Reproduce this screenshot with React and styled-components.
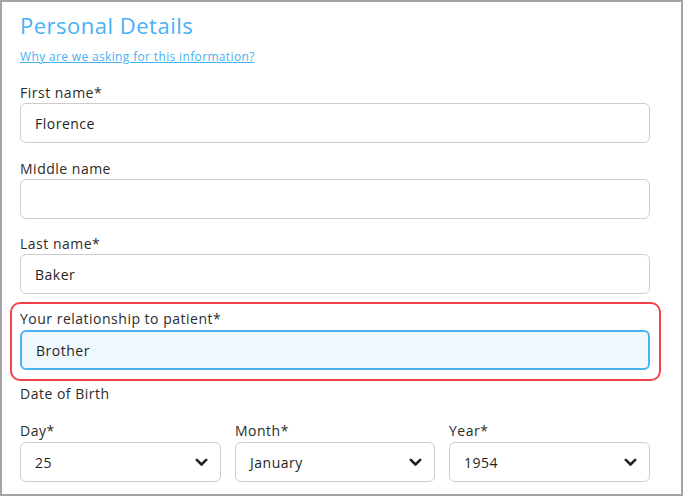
import React from "react"
import styled, { createGlobalStyle } from 'styled-components'

const GlobalStyle = createGlobalStyle`
  html, body {
    margin: 0;
    padding: 0;
    background: #ffffff;
  }
  * {
    box-sizing: border-box;
  }
`;

const Frame = styled.div`
  width: 683px;
  height: 496px;
  border: 2px solid #a4a4a4;
  padding: 9px 31px 0 18px;
  font-family: "Open Sans", "Noto Sans", sans-serif;
  color: #2b2b2b;
  letter-spacing: 0.5px;
  overflow: hidden;
`;

const Title = styled.h1`
  margin: 0;
  font-size: 22px;
  line-height: 28px;
  font-weight: 400;
  letter-spacing: 0.5px;
  color: #47b1f4;
`;

const InfoLink = styled.a`
  display: block;
  margin-top: 10px;
  font-size: 12px;
  line-height: 16px;
  letter-spacing: 0.35px;
  color: #47b1f4;
  text-decoration: underline;
  cursor: pointer;
`;

const Field = styled.div`
  margin-top: ${p => p.$gap || 15}px;
`;

const Label = styled.label`
  display: block;
  font-size: 14px;
  line-height: 21px;
  color: #2b2b2b;
`;

const Heading = styled.div`
  margin-top: 3px;
  font-size: 14px;
  line-height: 20px;
  color: #2b2b2b;
`;

const TextInput = styled.input`
  display: block;
  width: 100%;
  height: 40px;
  margin-top: ${p => (p.$active ? 1 : 0)}px;
  padding: 0 14px;
  font-family: inherit;
  font-size: 14px;
  letter-spacing: 0.5px;
  color: #1f1f1f;
  background: ${p => (p.$active ? '#f0f8ff' : '#ffffff')};
  border: ${p => (p.$active ? '2px solid #4ab3f4' : '1px solid #cdcdcd')};
  border-radius: 6px;
  outline: none;
`;

const Highlight = styled.div`
  margin: 8px -11px 0 -10px;
  padding: 4px 9px 9px 8px;
  border: 2px solid #f2434a;
  border-radius: 10px;
`;

const DateRow = styled.div`
  display: grid;
  grid-template-columns: 201px 200px 201px;
  column-gap: 14px;
  margin-top: 16px;
`;

const SelectBox = styled.div`
  display: flex;
  align-items: center;
  justify-content: space-between;
  height: 40px;
  margin-top: 1px;
  padding: 0 12px 0 14px;
  font-size: 14px;
  color: #1f1f1f;
  border: 1px solid #cdcdcd;
  border-radius: 6px;
  background: #ffffff;
`;

const Chevron = () => (
  <svg width="13" height="9" viewBox="0 0 13 9">
    <path d="M1.8 1.8 L6.5 6.5 L11.2 1.8" fill="none" stroke="#222" strokeWidth="2.6" strokeLinecap="round" strokeLinejoin="round" />
  </svg>
);

const DateSelect = ({ label, value }) => (
  <div>
    <Label>{label}</Label>
    <SelectBox>
      <span>{value}</span>
      <Chevron />
    </SelectBox>
  </div>
);

const App = () => {
  return (
    <Frame>
      <GlobalStyle />
      <Title>Personal Details</Title>
      <InfoLink>Why are we asking for this information?</InfoLink>
      <Field $gap={17}>
        <Label>First name*</Label>
        <TextInput defaultValue="Florence" />
      </Field>
      <Field>
        <Label>Middle name</Label>
        <TextInput defaultValue="" />
      </Field>
      <Field $gap={14}>
        <Label>Last name*</Label>
        <TextInput defaultValue="Baker" />
      </Field>
      <Highlight>
        <Label>Your relationship to patient*</Label>
        <TextInput $active defaultValue="Brother" />
      </Highlight>
      <Heading>Date of Birth</Heading>
      <DateRow>
        <DateSelect label="Day*" value="25" />
        <DateSelect label="Month*" value="January" />
        <DateSelect label="Year*" value="1954" />
      </DateRow>
    </Frame>
  )
}

export default App
